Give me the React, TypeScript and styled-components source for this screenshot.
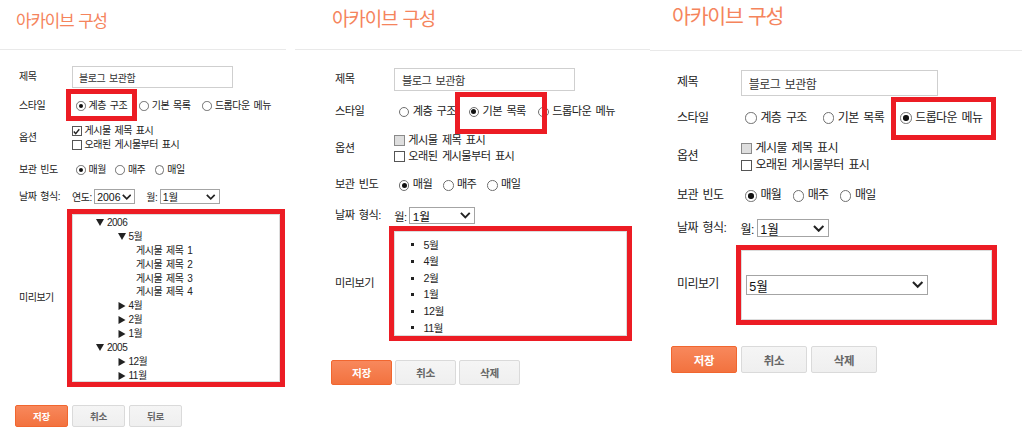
import React from 'react';
import styled, { createGlobalStyle } from 'styled-components';

const GlobalStyle = createGlobalStyle`
  html, body { margin: 0; padding: 0; background: #fff; }
  body {
    font-family: "Liberation Sans", "Noto Sans CJK KR", sans-serif;
    color: #222;
  }
`;

const RED = '#ec1c24';

type Variant = 'tree' | 'list' | 'dropdown';

interface PanelCfg {
  id: string;
  s: number;
  width: number;
  ml: number;
  headerH: number;
  titleSize: number;
  titleTop: number;
  padL: number;
  formPad: number;
  topGap: number;
  rowGap: number;
  inputW: number;
  inputH: number;
  style: number;
  styleGap: number;
  hl: [number, number, number, number];
  firstChecked: boolean;
  yearSelect: boolean;
  monthW: number;
  previewW: number;
  previewH: number;
  previewGap: number;
  variant: Variant;
  btnW: number;
  btnH: number;
  btnGap: number;
  btnTop: number;
  third: string;
}

const PANELS: PanelCfg[] = [
  {
    id: 'tree', s: 1, width: 286, ml: 0, headerH: 49, titleSize: 16.8, titleTop: 8,
    padL: 15, formPad: 4, topGap: 16, rowGap: 10, inputW: 161, inputH: 22,
    style: 0, styleGap: 12, hl: [9, 10, 7, 10], firstChecked: true, yearSelect: true, monthW: 60,
    previewW: 208, previewH: 168, previewGap: 9, variant: 'tree',
    btnW: 53, btnH: 22, btnGap: 4, btnTop: 23, third: '뒤로',
  },
  {
    id: 'list', s: 1.12, width: 355, ml: 9, headerH: 49, titleSize: 19, titleTop: 6,
    padL: 36, formPad: 4, topGap: 18, rowGap: 12, inputW: 181, inputH: 23,
    style: 1, styleGap: 12.5, hl: [11, 21, 13, 14], firstChecked: false, yearSelect: false, monthW: 66,
    previewW: 233, previewH: 105, previewGap: 6, variant: 'list',
    btnW: 61, btnH: 25, btnGap: 3, btnTop: 24, third: '삭제',
  },
  {
    id: 'dropdown', s: 1.2, width: 372, ml: 0, headerH: 50, titleSize: 20.5, titleTop: 3,
    padL: 21, formPad: 6, topGap: 19, rowGap: 12.5, inputW: 197, inputH: 26,
    style: 2, styleGap: 16, hl: [12, 14, 12, 9], firstChecked: false, yearSelect: false, monthW: 72,
    previewW: 251, previewH: 70, previewGap: 11.6, variant: 'dropdown',
    btnW: 66, btnH: 27, btnGap: 4, btnTop: 26, third: '삭제',
  },
];

const Page = styled.div`
  display: flex;
  width: 1022px;
  height: 437px;
  overflow: hidden;
  background: #fff;
`;

const PanelBox = styled.section<{ $w: number; $ml: number; $s: number }>`
  flex: none;
  width: ${(p) => p.$w}px;
  margin-left: ${(p) => p.$ml}px;
  font-size: ${(p) => 10 * p.$s}px;
  letter-spacing: -0.05em;
  word-spacing: 0.16em;
`;

const Header = styled.header<{ $h: number; $pl: number }>`
  height: ${(p) => p.$h}px;
  border-bottom: 1px solid #e9e9e9;
  padding-left: ${(p) => p.$pl + 1}px;
`;

const Title = styled.h2<{ $size: number; $top: number }>`
  margin: 0;
  padding-top: ${(p) => p.$top}px;
  font-family: "Noto Sans CJK KR", sans-serif;
  font-weight: 400;
  font-size: ${(p) => p.$size}px;
  line-height: 24px;
  letter-spacing: -0.06em;
  word-spacing: 0.1em;
  color: #f5845c;
`;

const Body = styled.div<{ $pt: number; $pl: number }>`
  padding: ${(p) => p.$pt}px 0 0 ${(p) => p.$pl}px;
`;

const Form = styled.div<{ $pl: number; $gap: number }>`
  display: flex;
  flex-direction: column;
  gap: ${(p) => p.$gap}px;
  padding-left: ${(p) => p.$pl}px;
`;

const Row = styled.div<{ $s: number; $h?: number; $mt?: number }>`
  display: flex;
  align-items: center;
  min-height: ${(p) => (p.$h ?? 16) * p.$s}px;
  margin-top: ${(p) => p.$mt ?? 0}px;
`;

const Label = styled.div<{ $s: number }>`
  flex: none;
  width: ${(p) => 53 * p.$s}px;
  line-height: ${(p) => 16 * p.$s}px;
  color: #222;
  white-space: nowrap;
`;

const TextInput = styled.input<{ $s: number; $w: number; $h: number }>`
  box-sizing: border-box;
  width: ${(p) => p.$w}px;
  height: ${(p) => p.$h}px;
  margin: 0;
  padding: 0 ${(p) => 6 * p.$s}px;
  border: 1px solid #cfcfcf;
  border-radius: 0;
  outline: none;
  font: inherit;
  letter-spacing: inherit;
  word-spacing: inherit;
  color: #333;
  background: #fff;
`;

const OptionGroup = styled.div<{ $s: number; $gap: number }>`
  display: flex;
  align-items: center;
  gap: ${(p) => p.$gap}px;
  padding-left: ${(p) => 4 * p.$s}px;
`;

const Option = styled.label<{ $s: number; $hl?: [number, number, number, number] }>`
  position: relative;
  display: inline-flex;
  align-items: center;
  gap: ${(p) => 3 * p.$s}px;
  height: ${(p) => 16 * p.$s}px;
  line-height: ${(p) => 16 * p.$s}px;
  white-space: nowrap;
  ${(p) =>
    p.$hl
      ? `&::after {
        content: "";
        position: absolute;
        top: -${p.$hl[0]}px;
        right: -${p.$hl[1]}px;
        bottom: -${p.$hl[2]}px;
        left: -${p.$hl[3]}px;
        border: 5px solid ${RED};
        pointer-events: none;
        z-index: 2;
      }`
      : ''}
`;

const RadioMark = styled.span<{ $s: number; $on: boolean }>`
  flex: none;
  box-sizing: border-box;
  position: relative;
  width: ${(p) => 9.5 * p.$s}px;
  height: ${(p) => 9.5 * p.$s}px;
  border: 1px solid #6f6f6f;
  border-radius: 50%;
  background: #fff;
  &::after {
    content: "";
    display: ${(p) => (p.$on ? 'block' : 'none')};
    position: absolute;
    left: 50%;
    top: 50%;
    width: ${(p) => 4.5 * p.$s}px;
    height: ${(p) => 4.5 * p.$s}px;
    margin: ${(p) => -2.25 * p.$s}px 0 0 ${(p) => -2.25 * p.$s}px;
    border-radius: 50%;
    background: #111;
  }
`;

const CheckList = styled.div`
  display: flex;
  flex-direction: column;
`;

const CheckLine = styled.label<{ $s: number }>`
  display: flex;
  align-items: center;
  gap: ${(p) => 3 * p.$s}px;
  height: ${(p) => 14 * p.$s}px;
  line-height: ${(p) => 14 * p.$s}px;
  white-space: nowrap;
`;

const CheckMark = styled.span<{ $s: number; $disabled?: boolean }>`
  flex: none;
  box-sizing: border-box;
  display: inline-flex;
  align-items: center;
  justify-content: center;
  width: ${(p) => 9.5 * p.$s}px;
  height: ${(p) => 9.5 * p.$s}px;
  border: 1px solid ${(p) => (p.$disabled ? '#8a8a8a' : '#555')};
  background: ${(p) => (p.$disabled ? '#dedede' : '#fff')};
`;

const DateGroup = styled.div<{ $s: number }>`
  display: flex;
  align-items: center;
  gap: ${(p) => 11 * p.$s}px;
`;

const DatePart = styled.div<{ $s: number }>`
  display: flex;
  align-items: center;
  gap: ${(p) => 2.5 * p.$s}px;
  white-space: nowrap;
`;

const FakeSelect = styled.div<{ $s: number; $w: number; $h: number }>`
  box-sizing: border-box;
  display: inline-flex;
  align-items: center;
  justify-content: space-between;
  width: ${(p) => p.$w}px;
  height: ${(p) => p.$h}px;
  padding: 0 ${(p) => 3 * p.$s}px 0 ${(p) => 2 * p.$s}px;
  border: 1px solid #a4a4a4;
  background: #fff;
  color: #111;
  font-size: ${(p) => 10.5 * p.$s}px;
  letter-spacing: 0;
  white-space: nowrap;
`;

const PreviewBox = styled.div<{ $w: number; $h: number; $center?: boolean }>`
  box-sizing: border-box;
  width: ${(p) => p.$w}px;
  height: ${(p) => p.$h}px;
  border: 1px solid #dcdcdc;
  outline: 5px solid ${RED};
  background: #fff;
  display: flex;
  flex-direction: column;
  justify-content: ${(p) => (p.$center ? 'center' : 'flex-start')};
`;

const TreeList = styled.ul`
  list-style: none;
  margin: 0;
  padding: 1px 0 0;
`;

const TreeRow = styled.li<{ $indent: number }>`
  display: flex;
  align-items: center;
  gap: 3px;
  height: 13.9px;
  line-height: 13.9px;
  padding-left: ${(p) => p.$indent}px;
  font-size: 10px;
  white-space: nowrap;
  color: #222;
`;

const BulletList = styled.ul<{ $s: number }>`
  list-style: none;
  margin: 0;
  padding: ${(p) => 4 * p.$s}px 0 0 ${(p) => 14 * p.$s}px;
`;

const BulletRow = styled.li<{ $s: number }>`
  display: flex;
  align-items: center;
  gap: ${(p) => 8.5 * p.$s}px;
  height: 16.6px;
  line-height: 16.6px;
  font-size: ${(p) => 9.6 * p.$s}px;
  color: #222;
  &::before {
    content: "";
    width: 3px;
    height: 3px;
    background: #222;
  }
`;

const DropdownWrap = styled.div<{ $s: number }>`
  padding-left: ${(p) => 3.5 * p.$s}px;
`;

const ButtonRow = styled.div<{ $gap: number; $mt: number }>`
  display: flex;
  gap: ${(p) => p.$gap}px;
  margin-top: ${(p) => p.$mt}px;
`;

const Button = styled.button<{ $primary?: boolean; $w: number; $h: number; $s: number }>`
  box-sizing: border-box;
  width: ${(p) => p.$w}px;
  height: ${(p) => p.$h}px;
  margin: 0;
  padding: 0;
  border-radius: 2px;
  border: 1px solid ${(p) => (p.$primary ? '#f1662f' : '#dadada')};
  background: ${(p) =>
    p.$primary
      ? 'linear-gradient(#f8885c, #f2723f)'
      : 'linear-gradient(#f5f5f5, #efefef)'};
  color: ${(p) => (p.$primary ? '#fff' : '#666')};
  font-family: "Liberation Sans", "Noto Sans CJK KR", sans-serif;
  font-weight: 700;
  font-size: ${(p) => 9.5 * p.$s}px;
  letter-spacing: -0.03em;
`;

const Chevron: React.FC<{ s: number }> = ({ s }) => (
  <svg width={9.5 * s} height={6 * s} viewBox="0 0 9.5 6">
    <polyline points="0.8,0.8 4.75,4.8 8.7,0.8" fill="none" stroke="#222" strokeWidth="1.7" />
  </svg>
);

const Tick: React.FC<{ s: number }> = ({ s }) => (
  <svg width={7 * s} height={7 * s} viewBox="0 0 7 7">
    <polyline points="0.8,3.5 2.7,5.6 6.3,1.2" fill="none" stroke="#222" strokeWidth="1.4" />
  </svg>
);

const TriDown = () => (
  <svg width="8" height="7" viewBox="0 0 8 7">
    <polygon points="0,0 8,0 4,7" fill="#222" />
  </svg>
);

const TriRight = () => (
  <svg width="8" height="8" viewBox="0 0 8 8">
    <polygon points="0.5,0 7.5,4 0.5,8" fill="#222" />
  </svg>
);

type TreeNode = { text: string; indent: number; icon: 'down' | 'right' | 'none' };

const TREE: TreeNode[] = [
  { text: '2006', indent: 23, icon: 'down' },
  { text: '5월', indent: 44.5, icon: 'down' },
  { text: '게시물 제목 1', indent: 63, icon: 'none' },
  { text: '게시물 제목 2', indent: 63, icon: 'none' },
  { text: '게시물 제목 3', indent: 63, icon: 'none' },
  { text: '게시물 제목 4', indent: 63, icon: 'none' },
  { text: '4월', indent: 44.5, icon: 'right' },
  { text: '2월', indent: 44.5, icon: 'right' },
  { text: '1월', indent: 44.5, icon: 'right' },
  { text: '2005', indent: 23, icon: 'down' },
  { text: '12월', indent: 44.5, icon: 'right' },
  { text: '11월', indent: 44.5, icon: 'right' },
];

const MONTHS = ['5월', '4월', '2월', '1월', '12월', '11월'];
const STYLES = ['계층 구조', '기본 목록', '드롭다운 메뉴'];
const FREQ = ['매월', '매주', '매일'];

const Preview: React.FC<{ c: PanelCfg }> = ({ c }) => {
  const s = c.s;
  if (c.variant === 'tree') {
    return (
      <PreviewBox $w={c.previewW} $h={c.previewH}>
        <TreeList>
          {TREE.map((n, i) => (
            <TreeRow key={i} $indent={n.indent}>
              {n.icon === 'down' && <TriDown />}
              {n.icon === 'right' && <TriRight />}
              <span>{n.text}</span>
            </TreeRow>
          ))}
        </TreeList>
      </PreviewBox>
    );
  }
  if (c.variant === 'list') {
    return (
      <PreviewBox $w={c.previewW} $h={c.previewH}>
        <BulletList $s={s}>
          {MONTHS.map((m) => (
            <BulletRow key={m} $s={s}>
              {m}
            </BulletRow>
          ))}
        </BulletList>
      </PreviewBox>
    );
  }
  return (
    <PreviewBox $w={c.previewW} $h={c.previewH} $center>
      <DropdownWrap $s={s}>
        <FakeSelect $s={s} $w={152 * s} $h={16 * s}>
          <span>5월</span>
          <Chevron s={s} />
        </FakeSelect>
      </DropdownWrap>
    </PreviewBox>
  );
};

const Panel: React.FC<{ c: PanelCfg }> = ({ c }) => {
  const s = c.s;
  return (
    <PanelBox $w={c.width} $ml={c.ml} $s={s}>
      <Header $h={c.headerH} $pl={c.padL}>
        <Title $size={c.titleSize} $top={c.titleTop}>아카이브 구성</Title>
      </Header>
      <Body $pt={c.topGap} $pl={c.padL}>
        <Form $pl={c.formPad} $gap={c.rowGap}>
          <Row $s={s}>
            <Label $s={s}>제목</Label>
            <TextInput $s={s} $w={c.inputW} $h={c.inputH} readOnly value="블로그 보관함" />
          </Row>
          <Row $s={s}>
            <Label $s={s}>스타일</Label>
            <OptionGroup $s={s} $gap={c.styleGap}>
              {STYLES.map((t, i) => (
                <Option key={t} $s={s} $hl={i === c.style ? c.hl : undefined}>
                  <RadioMark $s={s} $on={i === c.style} />
                  {t}
                </Option>
              ))}
            </OptionGroup>
          </Row>
          <Row $s={s}>
            <Label $s={s}>옵션</Label>
            <CheckList>
              <CheckLine $s={s}>
                <CheckMark $s={s} $disabled={!c.firstChecked}>
                  {c.firstChecked && <Tick s={s} />}
                </CheckMark>
                게시물 제목 표시
              </CheckLine>
              <CheckLine $s={s}>
                <CheckMark $s={s} />
                오래된 게시물부터 표시
              </CheckLine>
            </CheckList>
          </Row>
          <Row $s={s}>
            <Label $s={s}>보관 빈도</Label>
            <OptionGroup $s={s} $gap={9.5 * s}>
              {FREQ.map((t, i) => (
                <Option key={t} $s={s}>
                  <RadioMark $s={s} $on={i === 0} />
                  {t}
                </Option>
              ))}
            </OptionGroup>
          </Row>
          <Row $s={s} $h={17}>
            <Label $s={s}>날짜 형식:</Label>
            <DateGroup $s={s}>
              {c.yearSelect && (
                <DatePart $s={s}>
                  연도:
                  <FakeSelect $s={s} $w={41} $h={15 * s}>
                    <span>2006</span>
                    <Chevron s={s} />
                  </FakeSelect>
                </DatePart>
              )}
              <DatePart $s={s}>
                월:
                <FakeSelect $s={s} $w={c.monthW} $h={15 * s}>
                  <span>1월</span>
                  <Chevron s={s} />
                </FakeSelect>
              </DatePart>
            </DateGroup>
          </Row>
          <Row $s={s} $mt={c.previewGap - c.rowGap}>
            <Label $s={s}>미리보기</Label>
            <Preview c={c} />
          </Row>
        </Form>
        <ButtonRow $gap={c.btnGap} $mt={c.btnTop}>
          <Button $primary $w={c.btnW} $h={c.btnH} $s={s}>저장</Button>
          <Button $w={c.btnW} $h={c.btnH} $s={s}>취소</Button>
          <Button $w={c.btnW} $h={c.btnH} $s={s}>{c.third}</Button>
        </ButtonRow>
      </Body>
    </PanelBox>
  );
};

export default function App() {
  return (
    <>
      <GlobalStyle />
      <Page>
        {PANELS.map((c) => (
          <Panel key={c.id} c={c} />
        ))}
      </Page>
    </>
  );
}
